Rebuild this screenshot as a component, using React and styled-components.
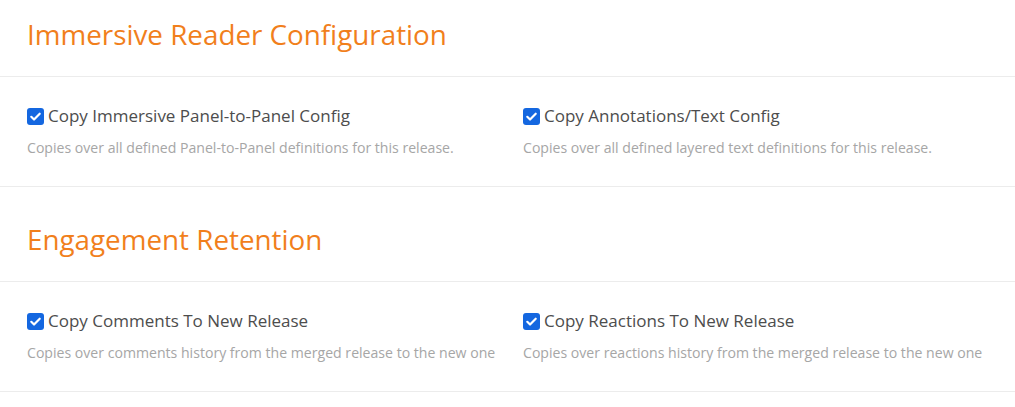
import React from "react";
import styled, { createGlobalStyle } from "styled-components";

const Global = createGlobalStyle`
  html, body { margin: 0; padding: 0; background: #fff; }
  body { font-family: "Open Sans", "Noto Sans", sans-serif; }
`;

const Page = styled.div`
  width: 1015px;
  background: #fff;
`;

const Section = styled.section`
  & + & {
    margin-top: 18px;
  }
`;

const Title = styled.h2`
  margin: 0;
  padding: 16px 0 23px 27px;
  line-height: 37px;
  font-size: 27.8px;
  font-weight: 400;
  color: #f17f1c;
  border-bottom: 1px solid #ececec;
`;

const Grid = styled.div`
  display: grid;
  grid-template-columns: 496px 1fr;
  padding: 27px 0 28px 27px;
  border-bottom: 1px solid #ececec;
`;

const Option = styled.div`
  display: flex;
  flex-direction: column;
`;

const Label = styled.label`
  display: flex;
  align-items: center;
  gap: 4px;
  font-size: 17px;
  color: #4d4d4d;
  line-height: 24px;
`;

const Box = styled.span`
  width: 17px;
  height: 17px;
  border-radius: 3px;
  background: #1467e0;
  display: inline-flex;
  align-items: center;
  justify-content: center;
  flex: none;
`;

const Desc = styled.p`
  margin: 10px 0 0;
  font-size: 14.1px;
  color: #a6a6a6;
  line-height: 20px;
`;

const Check = () => (
  <Box>
    <svg width="13" height="13" viewBox="0 0 16 16">
      <path d="M2.8 8.4l3.4 3.4L13.2 4.6" fill="none" stroke="#fff" strokeWidth="2.7" strokeLinecap="round" strokeLinejoin="round" />
    </svg>
  </Box>
);

const sections = [
  {
    title: "Immersive Reader Configuration",
    items: [
      ["Copy Immersive Panel-to-Panel Config", "Copies over all defined Panel-to-Panel definitions for this release."],
      ["Copy Annotations/Text Config", "Copies over all defined layered text definitions for this release."],
    ],
  },
  {
    title: "Engagement Retention",
    items: [
      ["Copy Comments To New Release", "Copies over comments history from the merged release to the new one"],
      ["Copy Reactions To New Release", "Copies over reactions history from the merged release to the new one"],
    ],
  },
];

export default function App() {
  return (
    <Page>
      <Global />
      {sections.map((s) => (
        <Section key={s.title}>
          <Title>{s.title}</Title>
          <Grid>
            {s.items.map(([l, d]) => (
              <Option key={l}>
                <Label>
                  <Check />
                  {l}
                </Label>
                <Desc>{d}</Desc>
              </Option>
            ))}
          </Grid>
        </Section>
      ))}
    </Page>
  );
}
